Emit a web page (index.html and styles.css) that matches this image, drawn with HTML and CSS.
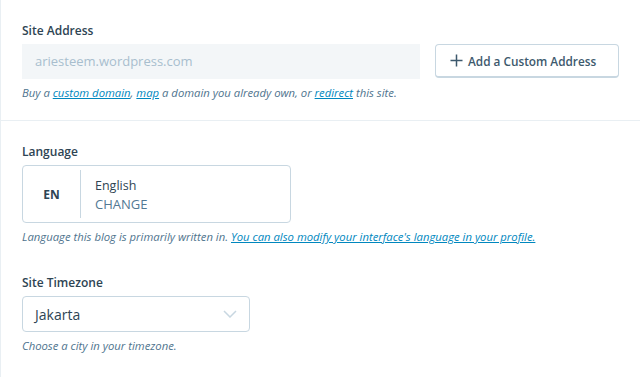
FILE: index.html
```html
<!DOCTYPE html>
<html lang="en">
<head>
    <meta charset="UTF-8">
    <meta name="viewport" content="width=device-width, initial-scale=1.0">
    <title>Site Settings</title>
    <link rel="stylesheet" href="styles.css">
</head>
<body>
    <div class="card">
        <div class="section">
            <label class="form-label">Site Address</label>
            <div class="address-row">
                <div class="address-input">ariesteem.wordpress.com</div>
                <button class="add-button">
                    <svg width="13" height="13" viewBox="0 0 13 13" class="plus">
                        <path d="M6.5 0.5v12M0.5 6.5h12" stroke="#3d596d" stroke-width="1.5" fill="none"/>
                    </svg>
                    <span>Add a Custom Address</span>
                </button>
            </div>
            <p class="help">Buy a <a href="#">custom domain</a>, <a href="#">map</a> a domain you already own, or <a href="#">redirect</a> this site.</p>
        </div>
        <div class="section lower">
            <label class="form-label">Language</label>
            <div class="language-box">
                <div class="lang-code">EN</div>
                <div class="lang-info">
                    <div class="lang-name">English</div>
                    <div class="lang-change">CHANGE</div>
                </div>
            </div>
            <p class="help">Language this blog is primarily written in. <a href="#">You can also modify your interface's language in your profile.</a></p>

            <label class="form-label timezone-label">Site Timezone</label>
            <div class="select">
                <span>Jakarta</span>
                <svg width="14" height="8" viewBox="0 0 14 8" class="chevron">
                    <path d="M1 1l6 6 6-6" stroke="#c8d7e1" stroke-width="1.5" fill="none"/>
                </svg>
            </div>
            <p class="help">Choose a city in your timezone.</p>
        </div>
    </div>
</body>
</html>
```

FILE: styles.css
```css
* {
    font-family: "Open Sans", sans-serif;
    padding: 0;
    margin: 0;
    box-sizing: border-box;
}
body {
    background-color: #FFFFFF;
    color: #2e4453;
}
.card {
    border-left: 1px solid #e9eff3;
    min-height: 377px;
}
.section {
    padding: 21px 21px 19px 21px;
    border-bottom: 1px solid #e9eff3;
}
.section.lower {
    border-bottom: none;
    padding-top: 21px;
}
.form-label {
    display: block;
    font-size: 12px;
    font-weight: 600;
    line-height: 20px;
    margin-bottom: 3px;
    color: #2e4453;
}
.timezone-label {
    margin-top: 28px;
}
.address-row {
    display: flex;
    gap: 15px;
}
.address-input {
    width: 398px;
    height: 35px;
    background-color: #f3f6f8;
    border: 1px solid #f3f6f8;
    color: #a8bece;
    font-size: 13px;
    line-height: 33px;
    padding-left: 12px;
}
.add-button {
    display: flex;
    align-items: center;
    gap: 5px;
    width: 184px;
    height: 34px;
    padding: 0 0 0 14px;
    background-color: #FFFFFF;
    border: 1px solid #c8d7e1;
    border-bottom-width: 2px;
    border-radius: 4px;
    font-size: 11.8px;
    font-weight: 600;
    white-space: nowrap;
    color: #3d596d;
}
.help {
    font-size: 11.3px;
    font-style: italic;
    color: #4f748e;
    margin-top: 6px;
    line-height: 16px;
}
.help a {
    color: #0087be;
}
.language-box {
    display: flex;
    width: 269px;
    height: 58px;
    border: 1px solid #c8d7e1;
    border-radius: 4px;
    align-items: stretch;
    padding: 4px 0;
}
.lang-code {
    width: 58px;
    border-right: 1px solid #c8d7e1;
    display: flex;
    align-items: center;
    justify-content: center;
    font-size: 12px;
    font-weight: 700;
    color: #2e4453;
}
.lang-info {
    padding: 6px 14px;
}
.lang-name {
    font-size: 12.5px;
    line-height: 19px;
    color: #2e4453;
}
.lang-change {
    font-size: 13px;
    line-height: 19px;
    color: #537994;
}
.select {
    display: flex;
    align-items: center;
    justify-content: space-between;
    width: 228px;
    height: 36px;
    border: 1px solid #c8d7e1;
    border-radius: 4px;
    padding: 0 12px;
    font-size: 14px;
    color: #2e4453;
}
```
